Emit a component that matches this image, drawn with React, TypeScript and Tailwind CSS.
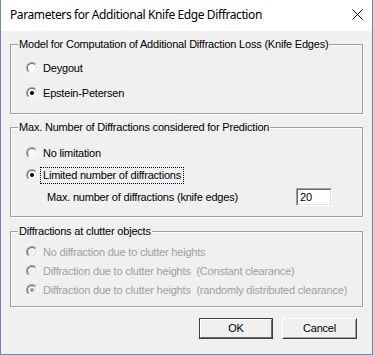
import type { ReactNode } from "react";

const ui = "font-['Liberation_Sans',Arial,sans-serif] text-[11px] leading-[13px] tracking-[-0.2px]";

function Radio({ checked, disabled }: { checked?: boolean; disabled?: boolean }) {
  return (
    <div className="w-[12px] h-[12px] rounded-full border border-t-[#a0a0a0] border-l-[#a0a0a0] border-b-white border-r-white shrink-0">
      <div
        className={`w-full h-full rounded-full border border-t-[#696969] border-l-[#696969] border-b-[#e3e3e3] border-r-[#e3e3e3] flex items-center justify-center ${
          disabled ? "bg-[#f0f0f0]" : "bg-white"
        }`}
      >
        {checked && <div className={`w-[4px] h-[4px] rounded-full ${disabled ? "bg-[#a0a0a0]" : "bg-black"}`} />}
      </div>
    </div>
  );
}

function Option({
  label,
  checked,
  disabled,
  focused,
  h = "h-[20px]",
}: {
  label: string;
  checked?: boolean;
  disabled?: boolean;
  focused?: boolean;
  h?: string;
}) {
  return (
    <div className={`flex items-center pl-[15px] ${h}`}>
      <Radio checked={checked} disabled={disabled} />
      <span
        className={`ml-[4px] px-[1px] whitespace-pre ${disabled ? "text-[#a0a0a0]" : "text-black"} ${
          focused ? "outline-1 outline-dotted outline-black outline-offset-[1px]" : ""
        }`}
      >
        {label}
      </span>
    </div>
  );
}

function Group({ title, className, children }: { title: string; className: string; children: ReactNode }) {
  return (
    <div className={`relative border border-[#a0a0a0] shadow-[inset_1px_1px_0_#fff,1px_1px_0_#fff] ${className}`}>
      <span className="absolute -top-[7px] left-[7px] bg-[#f0f0f0] px-[1px] whitespace-pre">{title}</span>
      {children}
    </div>
  );
}

export default function App() {
  return (
    <div className={`w-[373px] h-[355px] bg-[#f0f0f0] border-x border-b border-x-[#7588a2] border-b-[#7588a2] flex flex-col ${ui}`}>
      <div className="h-[31px] bg-white flex items-center shrink-0 pl-[9px] pr-[9px]">
        <span className="font-['Noto_Sans',sans-serif] text-[12px] tracking-[-0.4px] text-black flex-1 -mt-[2px]">
          Parameters for Additional Knife Edge Diffraction
        </span>
        <svg width="11" height="11" viewBox="0 0 11 11" className="-mt-[2px]">
          <path d="M0.5 0.5 L10.5 10.5 M10.5 0.5 L0.5 10.5" stroke="#000" strokeWidth="1" />
        </svg>
      </div>

      <div className="flex flex-col px-[9px] pt-[13px]">
        <Group title="Model for Computation of Additional Diffraction Loss (Knife Edges)" className="h-[70px] pt-[13px]">
          <div className="flex flex-col gap-[5px]">
            <Option label="Deygout" />
            <Option label="Epstein-Petersen" checked />
          </div>
        </Group>

        <Group title="Max. Number of Diffractions considered for Prediction" className="mt-[13px] h-[90px] pt-[15px]">
          <div className="flex flex-col gap-[2px]">
            <Option label="No limitation" />
            <Option label="Limited number of diffractions" checked focused />
            <div className="h-[20px] flex items-center pl-[36px]">
              <span className="flex-1">Max. number of diffractions (knife edges)</span>
              <div className="mr-[30px] w-[36px] h-[18px] border border-t-[#a0a0a0] border-l-[#a0a0a0] border-b-white border-r-white">
                <div className="w-full h-full bg-white border border-t-[#696969] border-l-[#696969] border-b-[#e3e3e3] border-r-[#e3e3e3] pl-[2px] flex items-center">
                  20
                </div>
              </div>
            </div>
          </div>
        </Group>

        <Group title="Diffractions at clutter objects" className="mt-[14px] h-[76px] pt-[11px]">
          <div className="flex flex-col gap-[1px]">
            <Option label="No diffraction due to clutter heights" disabled h="h-[18px]" />
            <Option label="Diffraction due to clutter heights  (Constant clearance)" disabled h="h-[18px]" />
            <Option label="Diffraction due to clutter heights  (randomly distributed clearance)" checked disabled h="h-[18px]" />
          </div>
        </Group>

        <div className="flex justify-end gap-[9px] mt-[11px] pr-[6px]">
          <button className="w-[74px] h-[21px] border border-[#404040] bg-[#f0f0f0]">
            <div className="w-full h-full border border-t-white border-l-white border-b-[#696969] border-r-[#696969] flex items-center justify-center">
              OK
            </div>
          </button>
          <button className="w-[75px] h-[21px] border border-t-white border-l-white border-b-[#404040] border-r-[#404040] bg-[#f0f0f0]">
            <div className="w-full h-full border border-t-[#f0f0f0] border-l-[#f0f0f0] border-b-[#a0a0a0] border-r-[#a0a0a0] flex items-center justify-center">
              Cancel
            </div>
          </button>
        </div>
      </div>
    </div>
  );
}
